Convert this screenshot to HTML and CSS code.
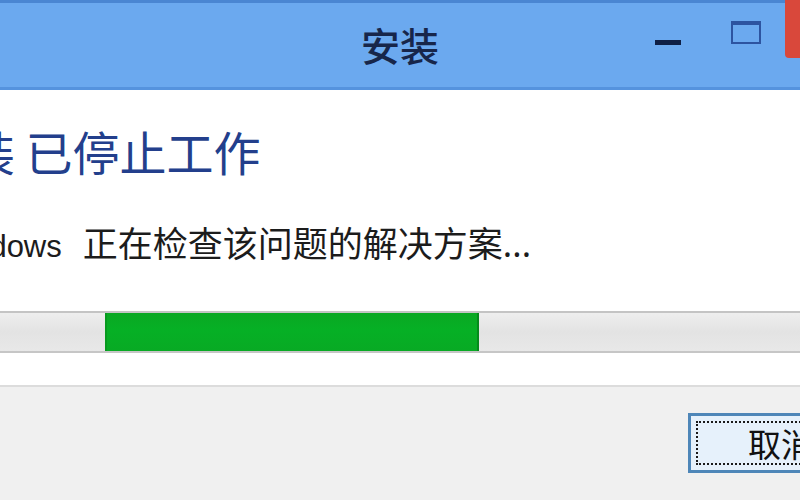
FILE: index.html
```html
<!DOCTYPE html>
<html>
<head>
	<title>安装</title>
	<meta charset="UTF-8">
	<link rel="stylesheet" href="styles.css">
</head>
<body>

    <div class="window">

        <header class="titlebar">
            <span class="title">安装</span>
            <div class="controls">
                <span class="btn-min"><i></i></span>
                <span class="btn-max"><i></i></span>
                <span class="btn-close"></span>
            </div>
        </header>

        <main class="content">
            <h1 class="headline">安装 已停止工作</h1>
            <p class="status"><span class="app">Windows</span> 正在检查该问题的解决方案...</p>
            <div class="progress">
                <div class="progress-bar"></div>
            </div>
        </main>

        <footer class="buttons">
            <button class="btn-cancel" type="button"><span>取消</span></button>
        </footer>

    </div>

</body>
</html>
```

FILE: styles.css
```css
*{
	margin: 0;
	padding: 0;
	box-sizing: border-box;
}
html, body{
	width: 800px;
	height: 500px;
	overflow: hidden;
	background: #f0f0f0;
}
body{
	font-family: "Noto Sans", "Noto Sans CJK SC", sans-serif;
}
.window{
	display: flex;
	flex-direction: column;
	height: 500px;
}

/* title bar */
.titlebar{
	height: 90px;
	display: grid;
	grid-template-columns: 1fr auto 1fr;
	align-items: center;
	background: #6ba9ef;
	border-top: 3px solid #4a86d2;
	border-bottom: 3px solid #5593de;
}
.title{
	grid-column: 2;
	font-family: "Noto Sans CJK SC", sans-serif;
	font-size: 39px;
	font-weight: 500;
	color: #17264a;
	margin-top: -3px;
}
.controls{
	grid-column: 3;
	justify-self: end;
	align-self: start;
	display: flex;
	align-items: flex-start;
	margin-right: -30px;
}
.btn-min{
	width: 26px;
	height: 42px;
	margin-right: 50px;
	display: flex;
	align-items: flex-end;
}
.btn-min i{
	display: block;
	width: 26px;
	height: 5px;
	background: #0e1f45;
}
.btn-max{
	width: 30px;
	height: 42px;
	margin-right: 24px;
	padding-top: 18px;
}
.btn-max i{
	display: block;
	width: 30px;
	height: 23px;
	border: 2px solid #2d54a0;
	border-top-width: 4px;
}
.btn-close{
	width: 45px;
	height: 58px;
	margin-top: -3px;
	background: #d9483b;
	border-bottom-left-radius: 4px;
}

/* message area */
.content{
	height: 295px;
	background: #ffffff;
	padding-top: 34px;
}
.headline{
	font-family: "Noto Sans CJK SC", sans-serif;
	font-size: 47px;
	font-weight: normal;
	line-height: 54px;
	color: #233f8c;
	margin-left: -79px;
	white-space: nowrap;
}
.status{
	font-size: 35px;
	line-height: 40px;
	color: #1c1c1c;
	margin-top: 46px;
	margin-left: -64px;
	white-space: nowrap;
}
.status .app{
	font-family: "Liberation Sans", sans-serif;
	font-size: 31px;
	margin-right: 12px;
}
.progress{
	margin-top: 44px;
	height: 42px;
	background: linear-gradient(#eeeeee, #e3e3e3 50%, #e8e8e8);
	border-top: 2px solid #c4c4c4;
	border-bottom: 2px solid #c6c6c6;
}
.progress-bar{
	margin-left: 105px;
	width: 374px;
	height: 100%;
	background: linear-gradient(#0aa823, #06b025 45%, #08aa24);
	border-left: 2px solid #079a1f;
	border-right: 2px solid #058a1c;
}

/* button row */
.buttons{
	flex: 1;
	background: #f0f0f0;
	border-top: 2px solid #dcdcdc;
	display: flex;
	justify-content: flex-end;
	padding-top: 26px;
	margin-right: -40px;
}
.btn-cancel{
	width: 152px;
	height: 60px;
	border: 3px solid #4e86b8;
	background: #e6f1fb;
	padding: 5px;
	font-family: "Noto Sans CJK SC", sans-serif;
	font-size: 33px;
	color: #111111;
}
.btn-cancel span{
	display: block;
	height: 100%;
	border: 2px dotted #1a1a1a;
	line-height: 40px;
	text-align: left;
	padding-left: 50px;
}
```
